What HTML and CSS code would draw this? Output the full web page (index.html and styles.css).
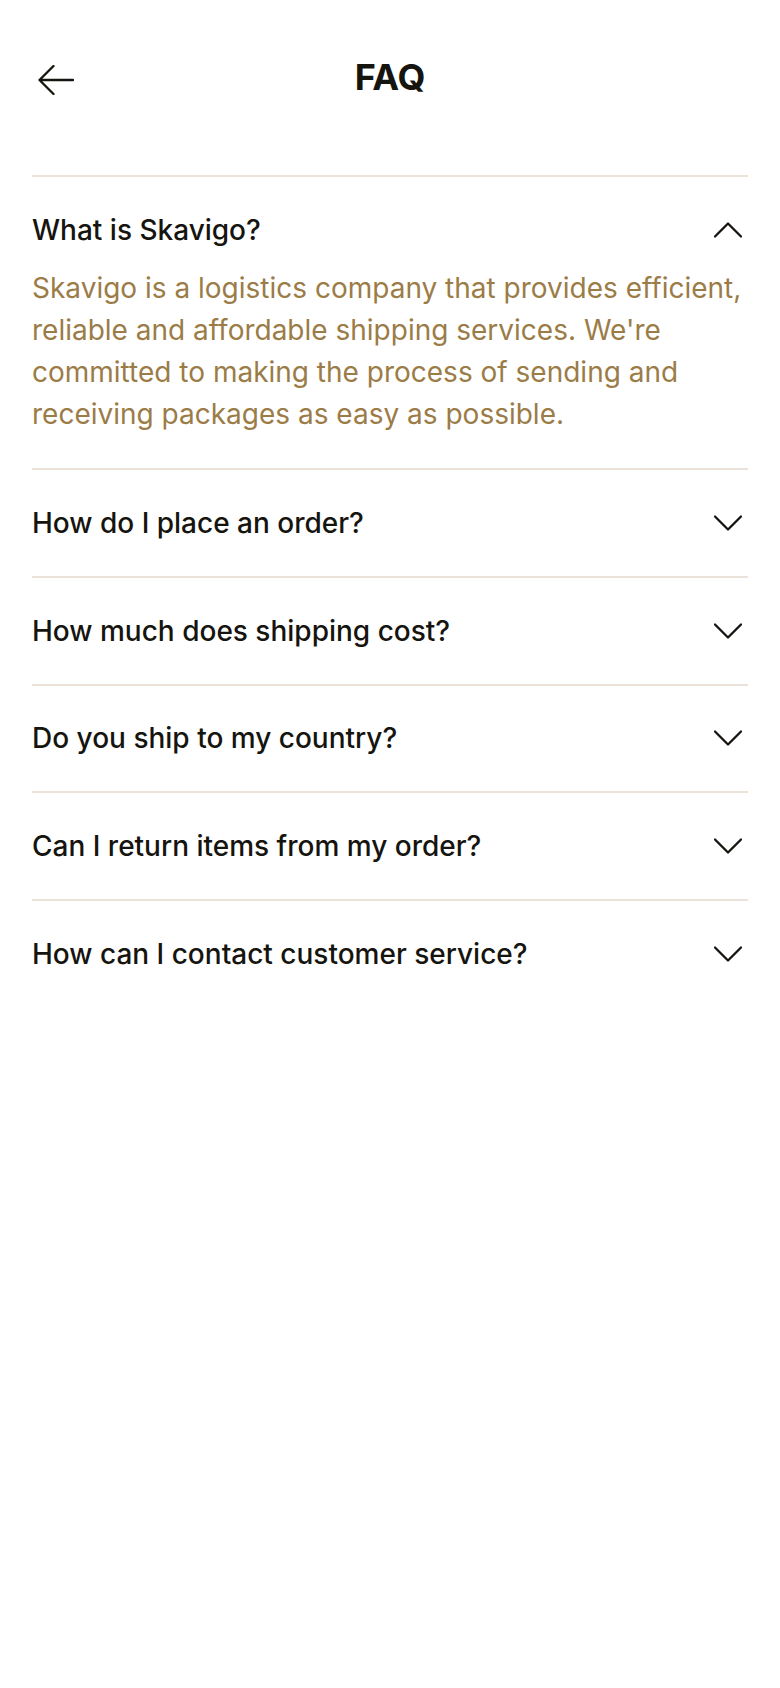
FILE: index.html
```html
<!DOCTYPE html>
<html lang="en">
<head>
<meta charset="utf-8">
<title>FAQ</title>
<link rel="stylesheet" href="styles.css">
</head>
<body>
<div class="screen">
  <header class="topbar">
    <button class="back" aria-label="Back">
      <svg width="36" height="30" viewBox="0 0 36 30" fill="none" stroke="#16140f" stroke-width="2.3" stroke-linecap="round" stroke-linejoin="round"><path d="M35 15H1.5M15.5 1L1.5 15l14 14"/></svg>
    </button>
    <h1 class="title">FAQ</h1>
    <span></span>
  </header>

  <section class="faq">
    <div class="faq-item faq-item--open">
      <div class="faq-q">
        <span class="faq-q-text">What is Skavigo?</span>
        <svg class="chev" width="28" height="16" viewBox="0 0 28 16" fill="none" stroke="#16140f" stroke-width="2.3" stroke-linecap="round" stroke-linejoin="round"><path d="M1 14.5l13-13 13 13"/></svg>
      </div>
      <p class="faq-a">Skavigo is a logistics company that provides efficient, reliable and affordable shipping services. We're committed to making the process of sending and receiving packages as easy as possible.</p>
    </div>
    <div class="faq-item">
      <div class="faq-q">
        <span class="faq-q-text">How do I place an order?</span>
        <svg class="chev" width="28" height="16" viewBox="0 0 28 16" fill="none" stroke="#16140f" stroke-width="2.3" stroke-linecap="round" stroke-linejoin="round"><path d="M1 1.5l13 13 13-13"/></svg>
      </div>
    </div>
    <div class="faq-item">
      <div class="faq-q">
        <span class="faq-q-text">How much does shipping cost?</span>
        <svg class="chev" width="28" height="16" viewBox="0 0 28 16" fill="none" stroke="#16140f" stroke-width="2.3" stroke-linecap="round" stroke-linejoin="round"><path d="M1 1.5l13 13 13-13"/></svg>
      </div>
    </div>
    <div class="faq-item">
      <div class="faq-q">
        <span class="faq-q-text">Do you ship to my country?</span>
        <svg class="chev" width="28" height="16" viewBox="0 0 28 16" fill="none" stroke="#16140f" stroke-width="2.3" stroke-linecap="round" stroke-linejoin="round"><path d="M1 1.5l13 13 13-13"/></svg>
      </div>
    </div>
    <div class="faq-item">
      <div class="faq-q">
        <span class="faq-q-text">Can I return items from my order?</span>
        <svg class="chev" width="28" height="16" viewBox="0 0 28 16" fill="none" stroke="#16140f" stroke-width="2.3" stroke-linecap="round" stroke-linejoin="round"><path d="M1 1.5l13 13 13-13"/></svg>
      </div>
    </div>
    <div class="faq-item">
      <div class="faq-q">
        <span class="faq-q-text">How can I contact customer service?</span>
        <svg class="chev" width="28" height="16" viewBox="0 0 28 16" fill="none" stroke="#16140f" stroke-width="2.3" stroke-linecap="round" stroke-linejoin="round"><path d="M1 1.5l13 13 13-13"/></svg>
      </div>
    </div>
  </section>
</div>
</body>
</html>
```

FILE: styles.css
```css
* { box-sizing: border-box; }

html, body {
  margin: 0;
  padding: 0;
  background: #ffffff;
}

body {
  font-family: Inter, "Noto Sans", "Liberation Sans", sans-serif;
  color: #16140f;
}

.screen {
  width: 780px;
  min-height: 1688px;
  padding: 0 32px;
}

.topbar {
  display: grid;
  grid-template-columns: 1fr auto 1fr;
  align-items: center;
  padding-top: 54px;
  height: 100px;
}

.back {
  justify-self: start;
  display: flex;
  background: none;
  border: 0;
  padding: 0 0 0 6px;
  margin: 6px 0 0;
  cursor: pointer;
}

.title {
  margin: 0;
  font-size: 36px;
  line-height: 46px;
  font-weight: 700;
  letter-spacing: -0.2px;
  color: #16140f;
}

.faq {
  margin-top: 75px;
}

.faq-item {
  border-top: 2px solid #ebe3d9;
}

.faq-q {
  display: flex;
  align-items: center;
  justify-content: space-between;
  padding: 34.83px 0;
}

.faq-q-text {
  font-size: 28px;
  line-height: 36px;
  font-weight: 500;
}

.chev {
  flex: none;
  margin-right: 6px;
}

.faq-item--open .faq-q {
  padding-bottom: 19px;
}

.faq-a {
  margin: 0;
  padding-bottom: 33.5px;
  font-size: 28px;
  line-height: 42px;
  color: #9b7c47;
}
```
